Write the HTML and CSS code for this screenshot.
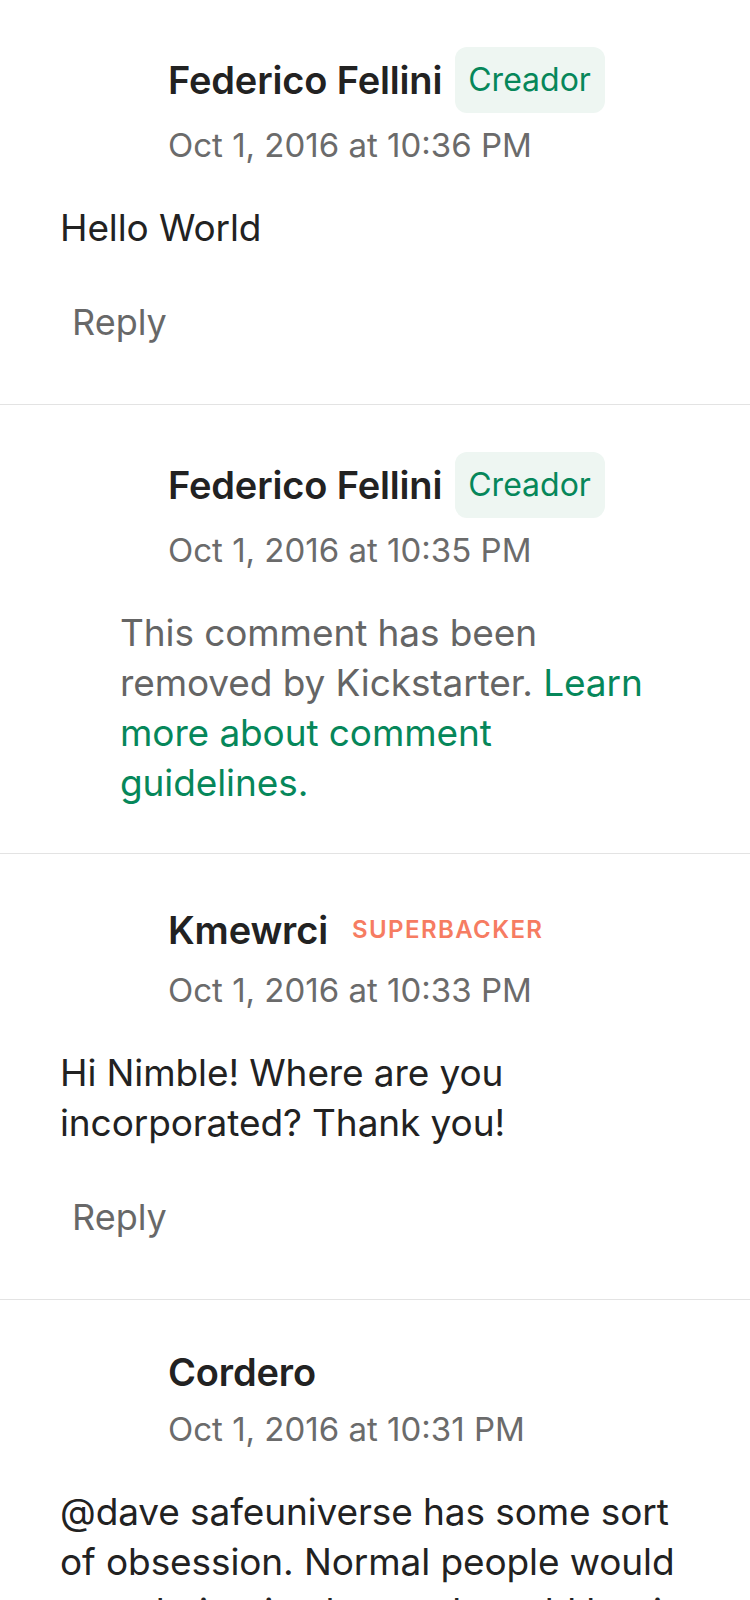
FILE: index.html
```html
<!DOCTYPE html>
<html lang="en">
<head>
<meta charset="utf-8">
<title>Comments</title>
<link rel="stylesheet" href="styles.css">
</head>
<body>
<main class="comments">
  <article class="comment">
    <header class="comment-head">
      <div class="avatar"></div>
      <div class="meta">
        <div class="author-row">
          <span class="author">Federico Fellini</span>
          <span class="badge badge-creator">Creador</span>
        </div>
        <time class="date">Oct 1, 2016 at 10:36 PM</time>
      </div>
    </header>
    <p class="body">Hello World</p>
    <button class="reply">Reply</button>
  </article>

  <article class="comment">
    <header class="comment-head">
      <div class="avatar"></div>
      <div class="meta">
        <div class="author-row">
          <span class="author">Federico Fellini</span>
          <span class="badge badge-creator">Creador</span>
        </div>
        <time class="date">Oct 1, 2016 at 10:35 PM</time>
      </div>
    </header>
    <p class="body body-removed">This comment has been removed by Kickstarter. <a class="link" href="#">Learn more about comment guidelines.</a></p>
  </article>

  <article class="comment">
    <header class="comment-head">
      <div class="avatar"></div>
      <div class="meta">
        <div class="author-row">
          <span class="author">Kmewrci</span>
          <span class="badge badge-superbacker">SUPERBACKER</span>
        </div>
        <time class="date">Oct 1, 2016 at 10:33 PM</time>
      </div>
    </header>
    <p class="body">Hi Nimble! Where are you incorporated? Thank you!</p>
    <button class="reply">Reply</button>
  </article>

  <article class="comment">
    <header class="comment-head">
      <div class="avatar"></div>
      <div class="meta">
        <div class="author-row">
          <span class="author">Cordero</span>
        </div>
        <time class="date">Oct 1, 2016 at 10:31 PM</time>
      </div>
    </header>
    <p class="body">@dave safeuniverse has some sort of obsession. Normal people would own their mistakes and would but it seems he would be</p>
    <button class="reply">Reply</button>
  </article>
</main>
</body>
</html>
```

FILE: styles.css
```css
* {
  box-sizing: border-box;
}

html, body {
  margin: 0;
  padding: 0;
  background: #ffffff;
}

body {
  font-family: Inter, "Liberation Sans", sans-serif;
  color: #222222;
  width: 750px;
  overflow: hidden;
}

.comments {
  display: flex;
  flex-direction: column;
}

.comment {
  padding: 47px 60px 45px 60px;
  border-bottom: 1px solid #e3e3e3;
}

.comment-head {
  display: flex;
  gap: 24px;
}

.avatar {
  width: 84px;
  flex: none;
}

.meta {
  display: flex;
  flex-direction: column;
}

.author-row {
  display: flex;
  align-items: center;
  gap: 13px;
}

.author {
  font-size: 38px;
  line-height: 50px;
  font-weight: 600;
  letter-spacing: -0.15px;
  color: #222222;
}

.badge {
  border-radius: 12px;
  padding: 12px 13px;
}

.badge-creator {
  background: #eef6f2;
  color: #06875a;
  font-size: 32px;
  line-height: 42px;
  padding: 12px 14px 12px 13px;
}

.badge-superbacker {
  color: #f67c62;
  font-size: 24px;
  line-height: 33px;
  font-weight: 600;
  letter-spacing: 1.4px;
  padding-left: 11px;
}

.date {
  display: block;
  margin-top: 12px;
  font-size: 33px;
  line-height: 40px;
  color: #6b6b6b;
}

.body {
  margin: 38px 0 0 0;
  font-size: 37px;
  line-height: 50px;
  letter-spacing: -0.1px;
  color: #222222;
}

.body-removed {
  padding-left: 60px;
  color: #656565;
}

.link {
  color: #06875a;
  text-decoration: none;
}

.reply {
  display: block;
  margin-top: 32px;
  padding: 16px 12px;
  border: 0;
  background: none;
  font-family: inherit;
  font-size: 36px;
  line-height: 42px;
  color: #686868;
}
```
